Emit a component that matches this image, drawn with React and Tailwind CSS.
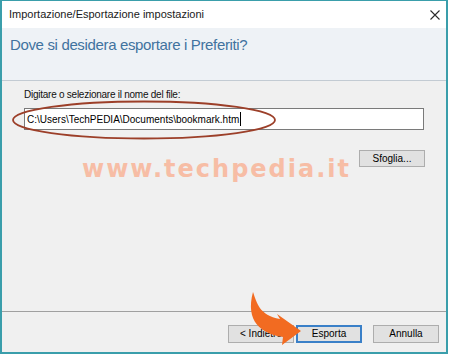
import React from 'react';

const Button = ({ children, primary = false, className = '' }) => (
  <button
    className={`h-[18px] w-[66px] text-[10px] leading-none text-black bg-[#e1e1e1] ${
      primary ? 'border-2 border-[#3a80c8]' : 'border border-[#adadad]'
    } ${className}`}
  >
    {children}
  </button>
);

export default function App() {
  return (
    <div className="relative w-[450px] h-[354px] bg-white overflow-hidden font-['Liberation_Sans',Arial,sans-serif] text-black">
      <div className="flex flex-col w-[448px] h-[354px] border-2 border-t border-[#3a9eab] bg-[#f0f0f0]">
        {/* Title bar */}
        <div className="flex items-center justify-between h-[27px] bg-white pl-[7px] pr-[6px]">
          <span className="text-[11px] text-[#1a1a1a]">Importazione/Esportazione impostazioni</span>
          <svg width="10" height="10" viewBox="0 0 10 10">
            <path d="M0.5 0.5L9.5 9.5M9.5 0.5L0.5 9.5" stroke="#2a2a2a" strokeWidth="1.1" />
          </svg>
        </div>

        {/* Header */}
        <div className="h-[53px] bg-[#eef2f6] border-b border-[#c3cbd3] pl-[8px] pt-[8px]">
          <h1 className="text-[15px] leading-[18px] tracking-[-0.35px] font-normal text-[#41739f]">
            Dove si desidera esportare i Preferiti?
          </h1>
        </div>

        {/* Body */}
        <div className="flex-1 flex flex-col pl-[22px] pr-[21px] pt-[8px]">
          <label className="text-[10px] leading-[12px] tracking-[-0.25px] text-[#111]">
            Digitare o selezionare il nome del file:
          </label>
          <div className="mt-[7px] w-[400px] h-[22px] flex items-center pl-[2px] bg-white border border-[#7a7a7a] text-[10px]">
            <span>{'C:\\Users\\TechPEDIA\\Documents\\bookmark.htm'}</span>
            <span className="ml-px w-px h-[14px] bg-black" />
          </div>
          <div className="mt-[20px] flex justify-end">
            <button className="h-[17px] w-[66px] text-[10px] leading-none bg-[#e1e1e1] border border-[#adadad]">
              Sfoglia...
            </button>
          </div>
        </div>

        {/* Footer */}
        <div className="h-[41px] flex justify-end items-start pt-[13px] pr-[7px] border-t border-[#a0a0a0]">
          <Button>&lt; Indietro</Button>
          <Button primary className="ml-[2px] w-[65px]">Esporta</Button>
          <Button className="ml-[11px]">Annulla</Button>
        </div>
      </div>

      {/* Watermark */}
      <span className="absolute left-[82px] top-[157px] text-[24px] leading-[24px] font-bold tracking-[2px] font-['DejaVu_Sans',sans-serif] text-[#f7bda5] pointer-events-none">
        www.techpedia.it
      </span>

      {/* Annotations */}
      <svg className="absolute left-0 top-0 pointer-events-none" width="450" height="354" viewBox="0 0 450 354">
        <ellipse cx="144" cy="120" rx="131" ry="18.5" fill="none" stroke="#9c3f29" strokeWidth="1.8" />
        <path
          d="M253 292C257 303 259 315 280 319L277 314L301 331L282 345L283 337C261 334 245 321 253 292Z"
          fill="#f26b21"
        />
      </svg>
    </div>
  );
}
